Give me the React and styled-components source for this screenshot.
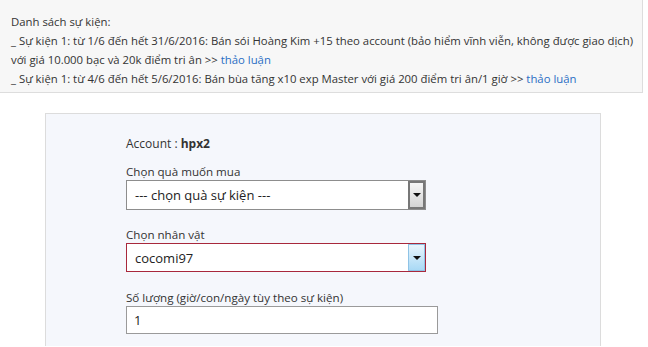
import React from 'react'
import styled, { createGlobalStyle } from 'styled-components'

const GlobalStyle = createGlobalStyle`
    body {
        margin: 0;
        background: #fff;
        font-family: "Open Sans", "Noto Sans", Arial, sans-serif;
        color: #333;
    }
`

const NoticeBox = styled.div`
    width: 643px;
    height: 93px;
    box-sizing: border-box;
    padding: 12px 11px 0;
    background: #f7f7f7;
    border-right: 1px solid #ddd;
    border-bottom: 1px solid #ddd;
    font-size: 11.35px;
    line-height: 19px;
`

const NoticeLine = styled.div`
    white-space: nowrap;
`

const TalkLink = styled.a`
    color: #2a6ec4;
    text-decoration: none;
`

const Panel = styled.div`
    width: 556px;
    height: 233px;
    box-sizing: border-box;
    margin: 20px 0 0 45px;
    padding: 22px 0 0 80px;
    background: #f5f7fc;
    border: 1px solid #dcdcdc;
    border-bottom: none;
`

const AccountRow = styled.div`
    font-size: 12px;
    line-height: 16px;

    b {
        font-weight: 700;
    }
`

const Field = styled.div`
    margin-top: ${p => p.gap}px;
`

const Label = styled.label`
    display: block;
    font-size: 11.6px;
    line-height: 16px;
`

const SelectBox = styled.div`
    width: 300px;
    height: ${p => p.h}px;
    box-sizing: border-box;
    display: flex;
    background: #fff;
    border: 1px solid ${p => (p.focus ? '#a8283c' : '#8d8d8d')};
`

const SelectText = styled.div`
    flex: 1;
    padding-left: 8px;
    font-size: 13px;
    display: flex;
    align-items: center;
    color: #222;
`

const ArrowButton = styled.div`
    width: 17px;
    box-sizing: border-box;
    display: flex;
    align-items: center;
    justify-content: center;
    border: ${p => (p.focus ? '1px solid #8fc3e6' : '2px solid #777')};
    background: ${p => (p.focus
        ? 'linear-gradient(#e8f5fd, #a9d9f5)'
        : 'linear-gradient(#f6f6f6, #d4d4d4)')};
`

const Arrow = styled.span`
    width: 0;
    height: 0;
    border-left: 4px solid transparent;
    border-right: 4px solid transparent;
    border-top: 4px solid #111;
`

const TextInput = styled.input`
    display: block;
    width: 312px;
    height: 28px;
    box-sizing: border-box;
    border: 1px solid #9a9a9a;
    padding: 0 7px;
    font-family: inherit;
    font-size: 13px;
    color: #222;
    background: #fff;
    outline: none;
`

const Select = ({ value, focus, h }) => (
    <SelectBox focus={focus} h={h}>
        <SelectText>{value}</SelectText>
        <ArrowButton focus={focus}><Arrow /></ArrowButton>
    </SelectBox>
)

const App = () => {
    return (
        <>
            <GlobalStyle />
            <NoticeBox>
                <NoticeLine>Danh sách sự kiện:</NoticeLine>
                <NoticeLine>_ Sự kiện 1: từ 1/6 đến hết 31/6/2016: Bán sói Hoàng Kim +15 theo account (bảo hiểm vĩnh viễn, không được giao dịch)</NoticeLine>
                <NoticeLine>với giá 10.000 bạc và 20k điểm tri ân &gt;&gt; <TalkLink href="#">thảo luận</TalkLink></NoticeLine>
                <NoticeLine>_ Sự kiện 1: từ 4/6 đến hết 5/6/2016: Bán bùa tăng x10 exp Master với giá 200 điểm tri ân/1 giờ &gt;&gt; <TalkLink href="#">thảo luận</TalkLink></NoticeLine>
            </NoticeBox>
            <Panel>
                <AccountRow>Account : <b>hpx2</b></AccountRow>
                <Field gap={12}>
                    <Label>Chọn quà muốn mua</Label>
                    <Select value="--- chọn quà sự kiện ---" h={30} />
                </Field>
                <Field gap={17}>
                    <Label>Chọn nhân vật</Label>
                    <Select value="cocomi97" focus h={29} />
                </Field>
                <Field gap={18}>
                    <Label>Số lượng (giờ/con/ngày tùy theo sự kiện)</Label>
                    <TextInput defaultValue="1" />
                </Field>
            </Panel>
        </>
    )
}

export default App
